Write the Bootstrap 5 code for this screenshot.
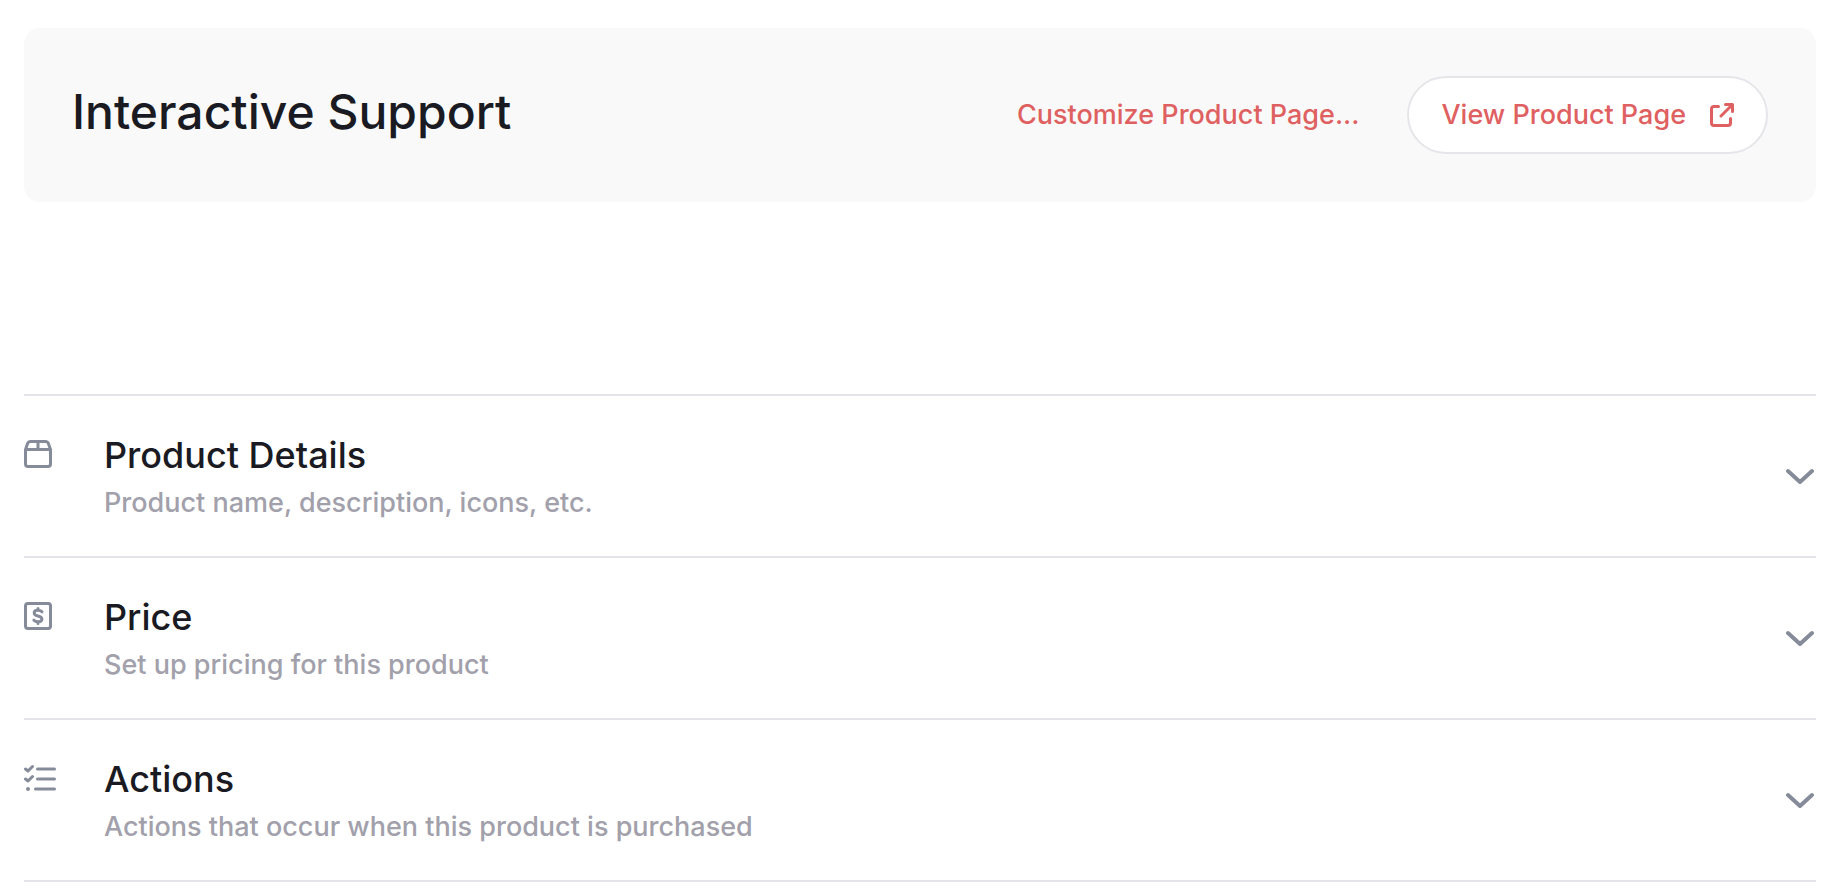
<!DOCTYPE html>
<html lang="en">
<head>
<meta charset="utf-8">
<meta name="viewport" content="width=device-width, initial-scale=1">
<title>Interactive Support</title>
<link href="https://cdn.jsdelivr.net/npm/bootstrap@5.3.0/dist/css/bootstrap.min.css" rel="stylesheet">
<style>
  body { font-family: Inter, "Open Sans", sans-serif; font-weight: 500; color: #1a1a23; background: #fff; }
  .page { padding: 28px 26px 0 24px; }
  .product-header { background: #f9f9f9; border-radius: 16px; padding: 48px; margin-bottom: 192px; }
  .product-name { font-size: 48px; line-height: 60px; font-weight: 500; padding-bottom: 6px; }
  .header-action { font-size: 27px; line-height: 40px; color: #df6060; font-weight: 500; }
  .header-action:hover { color: #c94c4c; }
  .view-button { background: #fff; border: 2px solid #e6e6ea; padding: 17px 32px; gap: 24px; }
  .section-list { border-top: 2px solid #e3e3e9; }
  .section-row { border-bottom: 2px solid #e3e3e9; }
  .section-toggle { height: 160px; background: none; color: inherit; font-weight: 500; }
  .section-icon { width: 80px; margin-top: 44px; color: #858b99; }
  .section-text { margin-top: 35px; }
  .section-title { font-size: 36px; line-height: 48px; }
  .section-note { font-size: 27px; line-height: 48px; color: #a1a0ab; }
  .chevron { color: #858b99; margin: 71px 2px 0 0; }
  svg { fill: none; stroke: currentColor; stroke-linecap: round; stroke-linejoin: round; flex-shrink: 0; display: block; }
</style>
</head>
<body>
<main class="page">
  <header class="product-header d-flex flex-wrap align-items-center justify-content-between">
    <h1 class="product-name mb-0">Interactive Support</h1>
    <div class="d-flex flex-wrap align-items-center gap-5">
      <a class="header-action text-decoration-none" href="#">Customize Product Page...</a>
      <button type="button" class="btn rounded-pill header-action view-button d-flex align-items-center">
        View Product Page
        <svg width="24" height="24" viewBox="0 0 24 24" stroke-width="3" aria-hidden="true"><path d="M8.500 3.500H4a2.500 2.500 0 0 0-2.500 2.500V20A2.500 2.500 0 0 0 4 22.500H18a2.500 2.500 0 0 0 2.500-2.500V15.500M11 13L22 2M15.500 1.500H22.500V8.500"/></svg>
      </button>
    </div>
  </header>

  <div class="section-list">
    <section class="section-row">
      <button type="button" class="section-toggle w-100 border-0 p-0 d-flex align-items-start text-start" aria-expanded="false">
        <span class="section-icon"><svg width="28" height="28" viewBox="0 0 28 28" stroke-width="3" aria-hidden="true"><path d="M1.500 9.500V24a2.500 2.500 0 0 0 2.500 2.500H24a2.500 2.500 0 0 0 2.500-2.500V9.500L24.300 3.200A2.800 2.800 0 0 0 21.700 1.500H6.300A2.800 2.800 0 0 0 3.700 3.200ZM1.500 9.500H26.500M14 1.500V9.500"/></svg></span>
        <span class="section-text flex-grow-1">
          <span class="section-title d-block">Product Details</span>
          <span class="section-note d-block">Product name, description, icons, etc.</span>
        </span>
        <svg class="chevron" width="28" height="18" viewBox="0 0 28 18" stroke-width="4" aria-hidden="true"><path d="M2 4L14 15L26 4"/></svg>
      </button>
    </section>
    <section class="section-row">
      <button type="button" class="section-toggle w-100 border-0 p-0 d-flex align-items-start text-start" aria-expanded="false">
        <span class="section-icon"><svg width="28" height="28" viewBox="0 0 28 28" stroke-width="3" aria-hidden="true"><rect x="1.500" y="1.500" width="25" height="25" rx="2.500"/><path d="M18 9.800C17 8.600 15.700 8.200 13.800 8.200C11.600 8.200 10.200 9.300 10.200 10.900C10.200 12.900 12 13.500 14 14C16.200 14.500 17.900 15.200 17.900 17.100C17.900 18.900 16.300 19.800 14.100 19.800C12.200 19.800 10.900 19.300 9.900 18.200M14 6.500V8M14 20V21.500"/></svg></span>
        <span class="section-text flex-grow-1">
          <span class="section-title d-block">Price</span>
          <span class="section-note d-block">Set up pricing for this product</span>
        </span>
        <svg class="chevron" width="28" height="18" viewBox="0 0 28 18" stroke-width="4" aria-hidden="true"><path d="M2 4L14 15L26 4"/></svg>
      </button>
    </section>
    <section class="section-row">
      <button type="button" class="section-toggle w-100 border-0 p-0 d-flex align-items-start text-start" aria-expanded="false">
        <span class="section-icon"><svg width="32" height="28" viewBox="0 0 32 28" stroke-width="3" aria-hidden="true"><path d="M1.500 5L4 7L8.500 2.500M1.500 15L4 17L8.500 12.500M13.500 5H30.500M13.500 15H30.500M11.500 25H30.500"/><circle cx="4" cy="25" r="2" fill="currentColor" stroke="none"/></svg></span>
        <span class="section-text flex-grow-1">
          <span class="section-title d-block">Actions</span>
          <span class="section-note d-block">Actions that occur when this product is purchased</span>
        </span>
        <svg class="chevron" width="28" height="18" viewBox="0 0 28 18" stroke-width="4" aria-hidden="true"><path d="M2 4L14 15L26 4"/></svg>
      </button>
    </section>
  </div>
</main>
<script src="https://cdn.jsdelivr.net/npm/bootstrap@5.3.0/dist/js/bootstrap.bundle.min.js"></script>
</body>
</html>
